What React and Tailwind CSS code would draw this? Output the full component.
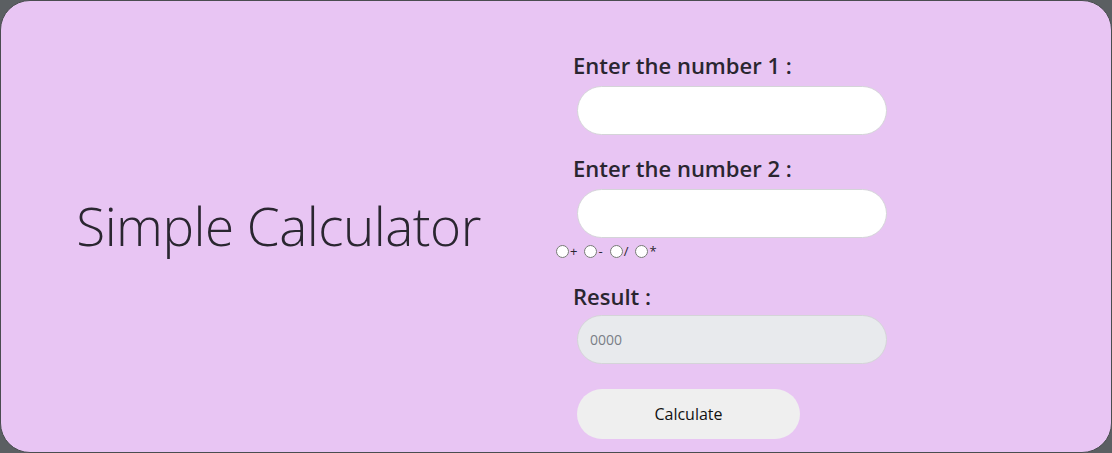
import { useState } from 'react';

const App = () => {
  const [op, setOp] = useState('');

  return (
    <div className="w-full h-[453px] bg-[#5b5f62]" style={{ fontFamily: '"Open Sans", sans-serif' }}>
      <div className="h-full flex rounded-[30px] border border-[#4a4d50] bg-[#e8c5f3] overflow-hidden">
        {/* left: title */}
        <div className="w-[555px] flex items-center justify-center pb-[2px]">
          <h1 className="text-[53px] font-light text-[#2a2630] tracking-[-0.5px] leading-none">Simple Calculator</h1>
        </div>

        {/* right: form */}
        <div className="flex flex-col items-start pt-[50px] text-[#2a2630]">
          <label className="ml-[17px] text-[22px] font-semibold leading-[28px]">Enter the number 1 :</label>
          <input
            type="text"
            className="ml-[21px] mt-[7px] w-[310px] h-[49px] rounded-full bg-white border border-[#d4d4d8] outline-none px-4"
          />
          <label className="ml-[17px] mt-[19px] text-[22px] font-semibold leading-[28px]">Enter the number 2 :</label>
          <input
            type="text"
            className="ml-[21px] mt-[7px] w-[310px] h-[49px] rounded-full bg-white border border-[#d4d4d8] outline-none px-4"
          />
          <div className="mt-[5px] flex items-center text-[13px] leading-[16px] text-[#2a2630]">
            {['+', '-', '/', '*'].map((o) => (
              <span key={o} className="flex items-center mr-[7px]">
                <input
                  type="radio"
                  name="op"
                  checked={op === o}
                  onChange={() => setOp(o)}
                  className="w-[13px] h-[13px] m-0"
                />
                <span className="ml-[1px]">{o}</span>
              </span>
            ))}
          </div>
          <label className="ml-[17px] mt-[23px] text-[22px] font-semibold leading-[28px]">Result :</label>
          <input
            type="text"
            disabled
            placeholder="0000"
            className="ml-[21px] mt-[5px] w-[310px] h-[49px] rounded-full bg-[#e8eaed] border border-[#d4d4d8] outline-none px-[12px] text-[14px] placeholder:text-[#7a7e86]"
          />
          <button className="ml-[21px] mt-[25px] w-[223px] h-[50px] rounded-full bg-[#efefef] text-[16px] text-[#111]">
            Calculate
          </button>
        </div>
      </div>
    </div>
  );
};

export default App;
